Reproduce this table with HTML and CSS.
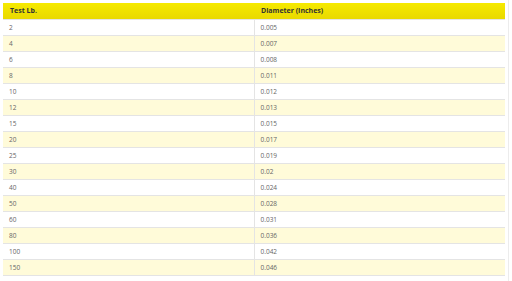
FILE: index.html
```html
<!DOCTYPE html>
<html>
<head>
<meta charset="utf-8">
<link rel="stylesheet" href="styles.css">
</head>
<body>
<div class="wrap">
<table class="line-table">
<thead>
<tr><th>Test Lb.</th><th>Diameter (Inches)</th></tr>
</thead>
<tbody>
<tr><td>2</td><td>0.005</td></tr>
<tr><td>4</td><td>0.007</td></tr>
<tr><td>6</td><td>0.008</td></tr>
<tr><td>8</td><td>0.011</td></tr>
<tr><td>10</td><td>0.012</td></tr>
<tr><td>12</td><td>0.013</td></tr>
<tr><td>15</td><td>0.015</td></tr>
<tr><td>20</td><td>0.017</td></tr>
<tr><td>25</td><td>0.019</td></tr>
<tr><td>30</td><td>0.02</td></tr>
<tr><td>40</td><td>0.024</td></tr>
<tr><td>50</td><td>0.028</td></tr>
<tr><td>60</td><td>0.031</td></tr>
<tr><td>80</td><td>0.036</td></tr>
<tr><td>100</td><td>0.042</td></tr>
<tr><td>150</td><td>0.046</td></tr>
</tbody>
</table>
</div>
</body>
</html>
```
FILE: styles.css
```css
html, body { margin: 0; padding: 0; background: #fff; }
body { font-family: "Open Sans", "Liberation Sans", sans-serif; }
.wrap {
  padding: 3px 0 0 3px;
  width: 505px;
  border-right: 1px solid #ececec;
  height: 278px;
}
.line-table {
  width: 502px;
  border-collapse: collapse;
  table-layout: fixed;
}
.line-table th {
  height: 16px;
  padding: 0 0 0 7px;
  text-align: left;
  font-size: 7px;
  font-weight: 700;
  color: #333;
  background: linear-gradient(#f6ea00, #e9d900);
  box-sizing: border-box;
}
.line-table td {
  height: 16px;
  padding: 0 0 0 6px;
  font-size: 6.5px;
  color: #666;
  border-top: 1px solid #e4e4e4;
  box-sizing: border-box;
}
.line-table td + td { border-left: 1px solid #e4e4e4; }
.line-table tbody tr:nth-child(even) td { background: #fffbd9; }
.line-table tbody tr:last-child td { border-bottom: 1px solid #e4e4e4; }
```
